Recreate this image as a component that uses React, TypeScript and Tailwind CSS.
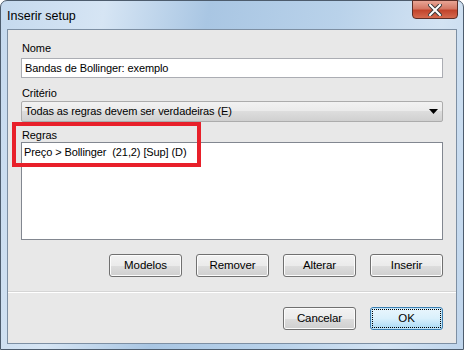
import React from 'react'

const font = { fontFamily: '"Liberation Sans", Arial, sans-serif' }

function WinButton({ label, primary = false }: { label: string; primary?: boolean }) {
  if (primary) {
    return (
      <div className="w-[73px] h-[23px] rounded-[3px] border border-[#3c7fb1] p-[1px] bg-gradient-to-b from-[#eaf6fd] via-[#d9f0fc] to-[#a7d9f5] shadow-[inset_0_0_0_1px_#c0e4f8]">
        <div className="h-full w-full border border-dotted border-black flex items-center justify-center text-[11.5px] text-black">
          {label}
        </div>
      </div>
    )
  }
  return (
    <div className="w-[73px] h-[23px] rounded-[3px] border border-[#707070] bg-[linear-gradient(to_bottom,#f2f2f2_0%,#ebebeb_50%,#dddddd_51%,#cfcfcf_100%)] shadow-[inset_0_0_0_1px_#fcfcfc] flex items-center justify-center text-[11.5px] text-black">
      {label}
    </div>
  )
}

export default function App() {
  return (
    <div className="w-[466px] h-[351px] bg-white" style={font}>
      <div className="relative w-[464px] h-[350px] rounded-t-[7px] border border-[#4d5c6d] bg-[linear-gradient(100deg,#c5d9ee_0%,#d6e5f4_20%,#a9c6e3_40%,#b9d2ea_65%,#d3e3f3_85%,#bfd5ec_100%)] flex flex-col">
        {/* Title bar */}
        <div className="h-[28px] flex items-start justify-between pl-[6px] pr-[5px]">
          <span className="mt-[6px] text-[12.5px] text-black">Inserir setup</span>
          <div className="w-[46px] h-[19px] -mt-[1px] rounded-b-[4px] border border-[#5c2e27] bg-[linear-gradient(to_bottom,#e8a595_0%,#d47865_45%,#c2442c_55%,#d56a4f_100%)] flex items-center justify-center">
            <svg width="14" height="12" viewBox="0 0 14 12">
              <path d="M2 1 L12 11 M12 1 L2 11" stroke="#3b3b3b" strokeWidth="4" strokeLinecap="square" />
              <path d="M2 1 L12 11 M12 1 L2 11" stroke="#ffffff" strokeWidth="2" strokeLinecap="square" />
            </svg>
          </div>
        </div>

        {/* Client area */}
        <div className="relative mx-[6px] mb-[5px] flex-1 border border-[#7d8fa3] bg-[#e8e8e8] flex flex-col px-[13px] pt-[11px] text-[11px] tracking-[-0.1px] text-black">
          <div className="h-[14px] leading-[14px] pl-[1px]">Nome</div>
          <div className="mt-[3px] h-[20px] bg-white border border-[#abadb3] flex items-center pl-[3px]">
            Bandas de Bollinger: exemplo
          </div>

          <div className="mt-[8px] h-[14px] leading-[14px] pl-[1px]">Critério</div>
          <div className="mt-[1px] h-[21px] rounded-[2px] border border-[#acacac] bg-[linear-gradient(to_bottom,#f2f2f2_0%,#ebebeb_45%,#dddddd_50%,#d0d0d0_100%)] flex items-center justify-between pl-[3px] pr-[4px]">
            <span>Todas as regras devem ser verdadeiras (E)</span>
            <svg width="9" height="5" viewBox="0 0 9 5">
              <path d="M0 0 H9 L4.5 5 Z" fill="#000" />
            </svg>
          </div>

          <div className="mt-[6px] h-[14px] leading-[14px] pl-[1px]">Regras</div>
          <div className="h-[98px] bg-white border border-[#828790] pl-[2px] pt-[1px]">
            <span className="whitespace-pre">Preço &gt; Bollinger  (21,2) [Sup] (D)</span>
          </div>

          <div className="mt-[14px] flex justify-end gap-[14px]">
            <WinButton label="Modelos" />
            <WinButton label="Remover" />
            <WinButton label="Alterar" />
            <WinButton label="Inserir" />
          </div>

          <div className="mt-[14px] -mx-[13px] h-[2px] border-t border-[#d5d5d5] border-b border-b-white" />

          <div className="mt-[14px] flex justify-end gap-[14px]">
            <WinButton label="Cancelar" />
            <WinButton label="OK" primary />
          </div>

          {/* red annotation box */}
          <div className="absolute left-[4px] top-[92px] w-[189px] h-[45px] border-[4px] border-[#e8202a]" />
        </div>
      </div>
    </div>
  )
}
